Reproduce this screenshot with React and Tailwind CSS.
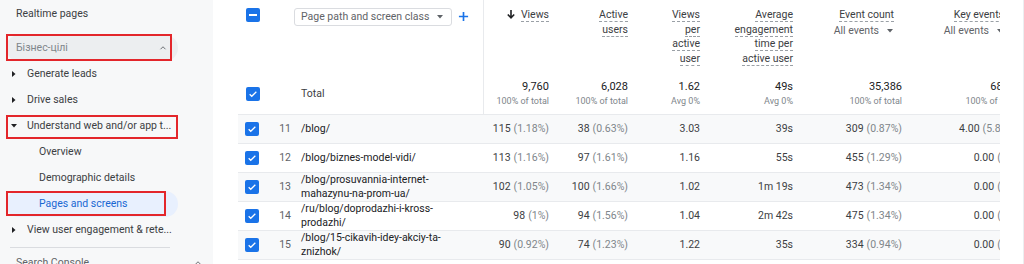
import React from "react"

const font = { fontFamily: "Roboto, 'Noto Sans', sans-serif" }

const Check = () => (
	<span className="w-[14px] h-[14px] rounded-[2px] bg-[#1a73e8] flex items-center justify-center shrink-0">
		<svg width="10" height="10" viewBox="0 0 24 24">
			<path d="M4 12.5l5 5L20 6.5" stroke="white" strokeWidth="3" fill="none" />
		</svg>
	</span>
)

const Indeterminate = () => (
	<span className="w-[14px] h-[14px] rounded-[2px] bg-[#1a73e8] flex items-center justify-center shrink-0">
		<span className="w-[8px] h-[2px] bg-white" />
	</span>
)

const Caret = ({ className = "" }) => (
	<svg width="6" height="4" viewBox="0 0 6 4" className={className}>
		<path d="M0 0h6L3 3.5z" fill="#5f6368" />
	</svg>
)

const Tri = ({ down }) => (
	<span className="w-[11px] flex justify-center">
		{down ? (
			<svg width="6" height="4" viewBox="0 0 6 4"><path d="M0 0h6L3 3.5z" fill="#202124" /></svg>
		) : (
			<svg width="4" height="6" viewBox="0 0 4 6"><path d="M0 0v6l3.5-3z" fill="#202124" /></svg>
		)}
	</span>
)

const Chevron = () => (
	<svg width="10" height="10" viewBox="0 0 24 24" className="ml-auto mr-[10px]">
		<path d="M6 15l6-6 6 6" stroke="#5f6368" strokeWidth="2.2" fill="none" />
	</svg>
)

const RedBox = ({ className }) => (
	<span className={`absolute border-2 border-[#e3262b] pointer-events-none ${className}`} />
)

const cols = [
	{ w: "w-[71px]", title: ["Views"], arrow: true, hp: "pr-[6px]" },
	{ w: "w-[79px]", title: ["Active", "users"], hp: "pr-[6px]" },
	{ w: "w-[72px]", title: ["Views", "per", "active", "user"], hp: "pr-[6px]" },
	{ w: "w-[93px]", title: ["Average", "engagement", "time per", "active user"], hp: "pr-[6px]" },
	{ w: "w-[109px]", title: ["Event count"], events: true, hp: "pr-[14px]" },
	{ w: "w-[116px]", title: ["Key events"], events: true, hp: "pr-[20px]" },
]

const totals = [
	["9,760", "100% of total"],
	["6,028", "100% of total"],
	["1.62", "Avg 0%"],
	["49s", "Avg 0%"],
	["35,386", "100% of total"],
	["68.00", "100% of total"],
]

const rows = [
	{ n: 11, path: ["/blog/"], v: [["115", "(1.18%)"], ["38", "(0.63%)"], ["3.03"], ["39s"], ["309", "(0.87%)"], ["4.00", "(5.88%)"]] },
	{ n: 12, path: ["/blog/biznes-model-vidi/"], v: [["113", "(1.16%)"], ["97", "(1.61%)"], ["1.16"], ["55s"], ["455", "(1.29%)"], ["0.00", "(0%)"]] },
	{ n: 13, path: ["/blog/prosuvannia-internet-", "mahazynu-na-prom-ua/"], v: [["102", "(1.05%)"], ["100", "(1.66%)"], ["1.02"], ["1m 19s"], ["473", "(1.34%)"], ["0.00", "(0%)"]] },
	{ n: 14, path: ["/ru/blog/doprodazhi-i-kross-", "prodazhi/"], v: [["98", "(1%)"], ["94", "(1.56%)"], ["1.04"], ["2m 42s"], ["475", "(1.34%)"], ["0.00", "(0%)"]] },
	{ n: 15, path: ["/blog/15-cikavih-idey-akciy-ta-", "znizhok/"], v: [["90", "(0.92%)"], ["74", "(1.23%)"], ["1.22"], ["35s"], ["334", "(0.94%)"], ["0.00", "(0%)"]] },
]

const Sidebar = () => (
	<div className="w-[213px] shrink-0 bg-[#f7f8f9] pt-[1px] text-[10.5px] text-[#3c4043]">
		<div className="h-[26px] flex items-center px-[16px]">Realtime pages</div>
		<div className="relative mt-[8px] h-[26px] mx-[6px] w-[172px] rounded-full bg-[#eceef0] flex items-center pl-[10px] text-[#80868b]">
			Бізнес-цілі
			<Chevron />
			<RedBox className="-top-[1px] left-0 w-[166px] h-[27px]" />
		</div>
		<div className="h-[26px] flex items-center pl-[8px] gap-[8px]"><Tri />Generate leads</div>
		<div className="h-[26px] flex items-center pl-[8px] gap-[8px]"><Tri />Drive sales</div>
		<div className="relative h-[26px] flex items-center pl-[8px] gap-[8px]">
			<Tri down />Understand web and/or app t...
			<RedBox className="top-[2px] left-[6px] w-[172px] h-[24px]" />
		</div>
		<div className="h-[26px] flex items-center pl-[39px]">Overview</div>
		<div className="h-[26px] flex items-center pl-[39px]">Demographic details</div>
		<div className="relative h-[26px] mx-[6px] w-[172px] rounded-full bg-[#e8f0fe] flex items-center pl-[33px] text-[#1967d2]">
			Pages and screens
			<RedBox className="top-0 left-0 w-[160px] h-[25px]" />
		</div>
		<div className="h-[26px] flex items-center pl-[8px] gap-[8px]"><Tri />View user engagement &amp; rete...</div>
		<div className="mt-[4px] mx-[10px] w-[160px] h-px bg-[#dadce0]" />
		<div className="mt-[2px] h-[26px] flex items-center pl-[16px] text-[#5f6368]">
			Search Console
			<Chevron />
		</div>
	</div>
)

const Table = () => (
	<div className="w-[762px] overflow-hidden">
		<div className="w-[786px]">
			{/* header titles */}
			<div className="flex h-[72px]">
				<div className="w-[246px] flex border-r border-[#e8eaed] pt-[8px]">
					<div className="w-[32px] pl-[8px]"><Indeterminate /></div>
					<div className="w-[24px]" />
					<div className="flex items-start">
						<div className="h-[18px] w-[158px] border border-[#dadce0] rounded-[3px] flex items-center pl-[6px] pr-[8px] text-[#5f6368]">
							Page path and screen class
							<Caret className="ml-auto" />
						</div>
						<svg width="11" height="11" viewBox="0 0 12 12" className="ml-[6px] mt-[3px]">
							<path d="M6 1v10M1 6h10" stroke="#1a73e8" strokeWidth="1.8" />
						</svg>
					</div>
				</div>
				{cols.map((c, i) => (
					<div key={i} className={`${c.w} ${c.hp} pt-[8px] text-right leading-[14.5px] text-[#3c4043] whitespace-nowrap`}>
						{c.title.map((t, j) => (
							<div key={j}>
								{c.arrow && (
									<svg width="8" height="9" viewBox="0 0 8 9" className="inline mr-[6px] -mt-[2px]">
										<path d="M4 0v7.5M0.8 4.5L4 7.8 7.2 4.5" stroke="#202124" strokeWidth="1.6" fill="none" />
									</svg>
								)}
								<span className="border-b border-dashed border-[#9aa0a6]">{t}</span>
							</div>
						))}
						{c.events && (
							<div className="flex items-center justify-end text-[#5f6368] mt-[1px]">
								All events
								<Caret className="ml-[8px] mr-[1px]" />
							</div>
						)}
					</div>
				))}
			</div>
			{/* total row */}
			<div className="flex h-[43px] border-b border-[#e8eaed]">
				<div className="w-[246px] flex items-center border-r border-[#e8eaed] pt-[2px]">
					<div className="w-[32px] pl-[8px]"><Check /></div>
					<div className="w-[31px]" />
					<div className="text-[#3c4043]">Total</div>
				</div>
				{cols.map((c, i) => (
					<div key={i} className={`${c.w} pr-[6px] pt-[1px] flex flex-col justify-center items-end whitespace-nowrap`}>
						<div className="text-[11px] leading-[15px] text-[#202124]">{totals[i][0]}</div>
						<div className="text-[9px] leading-[14px] text-[#80868b]">{totals[i][1]}</div>
					</div>
				))}
			</div>
			{/* data rows */}
			{rows.map((r, ri) => (
				<div key={r.n} className={`flex h-[29px] border-b border-[#e8eaed] ${ri % 2 === 0 ? "bg-[#f8f9fa]" : "bg-white"}`}>
					<div className="w-[246px] flex items-center">
						<div className="w-[32px] pl-[7px]"><Check /></div>
						<div className="w-[21px] text-right text-[#5f6368]">{r.n}</div>
						<div className="pl-[10px] leading-[14px] text-[#202124]">
							{r.path.map((p, j) => <div key={j}>{p}</div>)}
						</div>
					</div>
					{r.v.map((v, i) => (
						<div key={i} className={`${cols[i].w} pr-[6px] flex items-center justify-end whitespace-nowrap`}>
							<span className="text-[#3c4043]">{v[0]}</span>
							{v[1] && <span className="ml-[3px] text-[#80868b]">{v[1]}</span>}
						</div>
					))}
				</div>
			))}
		</div>
	</div>
)

export default function App() {
	return (
		<div style={font} className="w-[1024px] h-[264px] overflow-hidden flex bg-white text-[10.5px]">
			<Sidebar />
			<div className="flex-1 flex pl-[25px] border-r border-[#eceef0]">
				<Table />
			</div>
		</div>
	)
}
